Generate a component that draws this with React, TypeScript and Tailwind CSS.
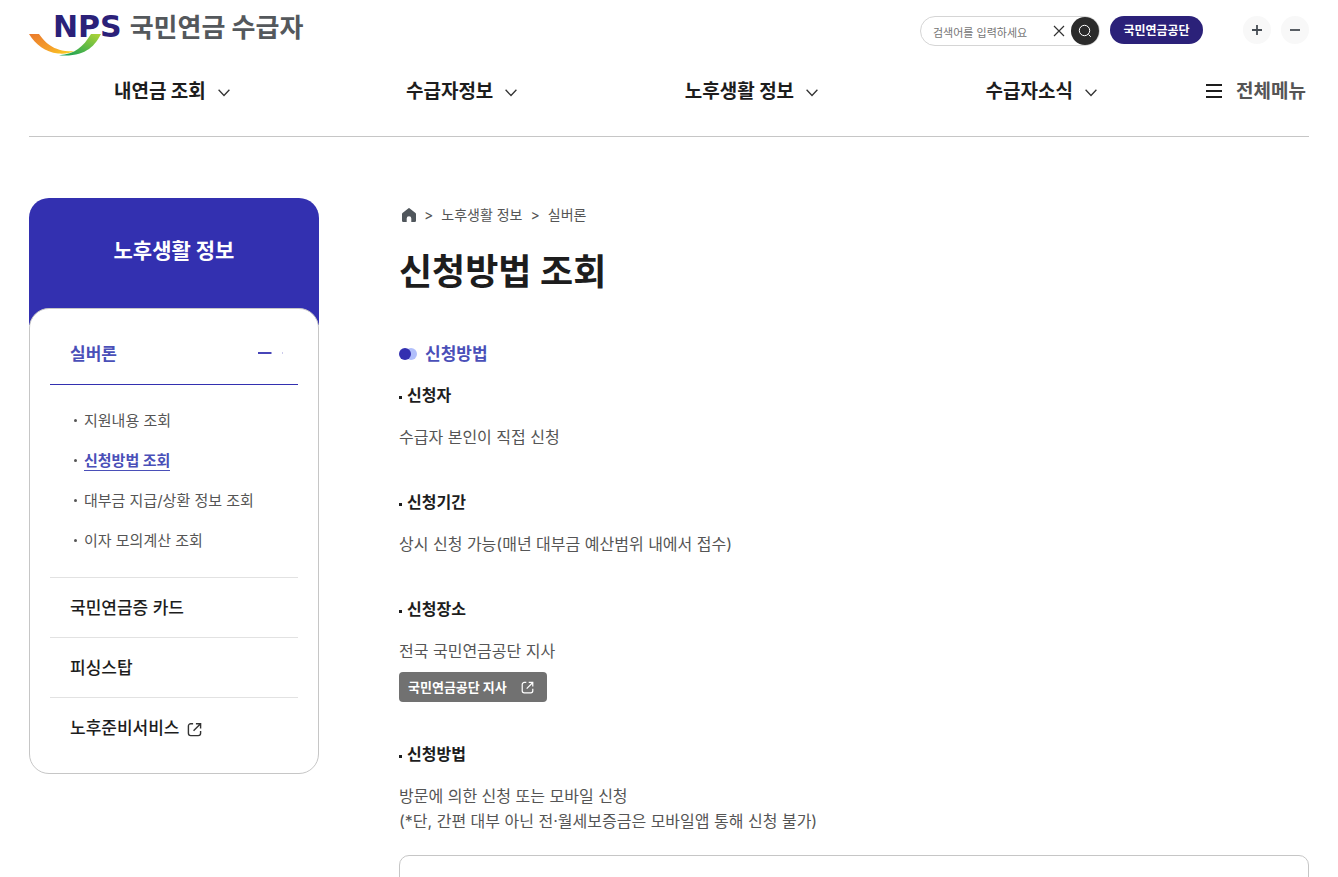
import type { ReactNode } from "react";

const NAV = ["내연금 조회", "수급자정보", "노후생활 정보", "수급자소식"];

const SUB_ITEMS = [
  { label: "지원내용 조회", current: false },
  { label: "신청방법 조회", current: true },
  { label: "대부금 지급/상환 정보 조회", current: false },
  { label: "이자 모의계산 조회", current: false },
];

function ExternalIcon({ className }: { className: string }) {
  return (
    <svg viewBox="0 0 16 16" fill="none" stroke="currentColor" className={className} aria-hidden="true">
      <path d="M6.500 1.800H4A2.500 2.500 0 0 0 1.500 4.300V12A2.500 2.500 0 0 0 4 14.500h8a2.500 2.500 0 0 0 2.500-2.500V9.500" strokeWidth="1.500" />
      <path d="M9.500 1.800h5v5M14.200 2.100 7 9.300" strokeWidth="1.500" />
    </svg>
  );
}

function Logo() {
  return (
    <a href="#" className="relative flex h-[44px] items-start" aria-label="NPS 국민연금 수급자">
      <svg viewBox="0 0 72 24" className="absolute left-0 top-[19px] h-[24px] w-[72px]" aria-hidden="true">
        <defs>
          <linearGradient id="orange" x1="0" y1="0" x2="1" y2="1">
            <stop offset="0" stopColor="#ea7a2c" />
            <stop offset="0.600" stopColor="#f5a02a" />
            <stop offset="1" stopColor="#fbd520" />
          </linearGradient>
          <linearGradient id="green" x1="0" y1="1" x2="1" y2="0">
            <stop offset="0" stopColor="#0f9d58" />
            <stop offset="0.500" stopColor="#5cb947" />
            <stop offset="1" stopColor="#b2d536" />
          </linearGradient>
        </defs>
        <path d="M0 1h10C16 9 24 19 45 18.300 41 20.300 35 21 29 20.500 16 19 7 12 0 1Z" fill="url(#orange)" />
        <path d="M62 1h10C66 13 56 24.500 30 22.300 46 21 54 14 62 1Z" fill="url(#green)" />
      </svg>
      <span className="relative ml-[24px] font-['DejaVu_Sans'] text-[30px] font-bold leading-[26px] text-[#2b2179]">NPS</span>
      <span className="ml-[8px] text-[26px] font-bold leading-[27px] text-[#54585c]">국민연금 수급자</span>
    </a>
  );
}

function Block({ title, children }: { title: string; children: ReactNode }) {
  return (
    <section className="mb-[40px]">
      <h3 className="flex items-center gap-[5px] text-[16px] font-bold leading-[25px] text-[#1d1d1d]">
        <span className="mt-1 size-[3px] bg-[#1d1d1d]" />
        {title}
      </h3>
      <div className="mt-[17px] text-[16px] leading-[25px] text-[#555]">{children}</div>
    </section>
  );
}

export default function App() {
  return (
    <div className="min-h-screen bg-white font-[Inter,'Noto_Sans_CJK_KR',sans-serif] text-[#1d1d1d]">
      <div className="mx-auto max-w-7xl">
        <header className="border-b border-[#c6c6c6]">
          <div className="flex items-start justify-between pt-[14px]">
            <Logo />
            <div className="flex items-start pt-[2px]">
              <form role="search" className="flex h-[30px] w-[180px] items-center rounded-full border border-[#d5d5d5] pl-3" onSubmit={(e) => e.preventDefault()}>
                <input type="text" aria-label="검색어" placeholder="검색어를 입력하세요" className="min-w-0 flex-1 pt-[4px] text-[11px] outline-none placeholder:text-[#757575]" />
                <button type="button" aria-label="지우기" className="mr-[6px] grid size-[12px] place-items-center">
                  <svg viewBox="0 0 12 12" className="size-[12px]" stroke="#333" strokeWidth="1.200" aria-hidden="true">
                    <path d="M1 1l10 10M11 1 1 11" />
                  </svg>
                </button>
                <button type="submit" aria-label="검색" className="grid size-[28px] place-items-center rounded-full bg-[#2b2b2b]">
                  <svg viewBox="0 0 14 14" className="size-[14px]" fill="none" stroke="#fff" aria-hidden="true">
                    <circle cx="6.500" cy="6.500" r="5.200" />
                    <path d="m10.500 10.500 2.300 2.300" />
                  </svg>
                </button>
              </form>
              <a href="#" className="ml-[10px] grid h-[28px] w-[93px] place-items-center rounded-full bg-[#2b2179] pt-px text-[12px] font-bold text-white">국민연금공단</a>
              <button type="button" aria-label="확대" className="ml-[40px] grid size-[28px] place-items-center rounded-full bg-[#f8f8f8]">
                <svg viewBox="0 0 10 10" className="size-[10px]" stroke="#464c53" strokeWidth="1.800" aria-hidden="true">
                  <path d="M0 5h10M5 0v10" />
                </svg>
              </button>
              <button type="button" aria-label="축소" className="ml-[10px] grid size-[28px] place-items-center rounded-full bg-[#f8f8f8]">
                <svg viewBox="0 0 10 10" className="size-[10px]" stroke="#464c53" strokeWidth="1.800" aria-hidden="true">
                  <path d="M0 5h10" />
                </svg>
              </button>
            </div>
          </div>
          <nav className="flex h-[78px] items-start pt-[19px]" aria-label="주 메뉴">
            <ul className="grid flex-1 grid-cols-4 pr-[18px]">
              {NAV.map((label) => (
                <li key={label} className="flex justify-center pr-1">
                  <button type="button" className="flex items-center gap-[12px] text-[19px] font-bold leading-[30px]">
                    {label}
                    <svg viewBox="0 0 12 8" className="mt-[2px] h-[8px] w-[12px]" fill="none" stroke="#333" strokeWidth="1.300" aria-hidden="true">
                      <path d="m.6.8 5.400 5.700L11.400.8" />
                    </svg>
                  </button>
                </li>
              ))}
            </ul>
            <button type="button" className="mr-[3px] flex items-center gap-[14px] text-[19px] font-bold leading-[30px] text-[#555]">
              <svg viewBox="0 0 16 14" className="mb-[2px] h-[14px] w-[16px]" stroke="#1d1d1d" strokeWidth="1.800" aria-hidden="true">
                <path d="M0 1h16M0 7h16M0 13h16" />
              </svg>
              전체메뉴
            </button>
          </nav>
        </header>

        <div className="flex items-start gap-[80px] pt-[61px]">
          <aside className="w-[290px] shrink-0">
            <h2 className="h-[127px] rounded-t-[20px] bg-[#3330b0] pt-[38px] text-center text-[21px] font-bold leading-[30px] text-white">노후생활 정보</h2>
            <div className="relative -mt-[17px] rounded-[20px] border border-[#c6c6c6] bg-white px-5 py-[15px]">
              <button type="button" className="flex h-[61px] w-full items-center justify-between border-b border-[#3330b0] pl-5 pr-[14px] pt-[2px] text-[17px] font-bold text-[#4a4fb8]">
                실버론
                <svg viewBox="0 0 26 4" className="mb-1 h-[4px] w-[26px]" aria-hidden="true">
                  <path d="M0 2h13.500" stroke="#3330b0" strokeWidth="1.800" />
                  <path d="M24 2h1" stroke="#3330b0" strokeOpacity="0.500" />
                </svg>
              </button>
              <ul className="border-b border-[#e2e2e2] pb-[17px] pl-6 pt-[15px]">
                {SUB_ITEMS.map(({ label, current }) => (
                  <li key={label} className="flex h-[40px] items-center gap-[7px] text-[15px] text-[#555]">
                    <span className="size-[3px] rounded-full bg-[#555]" />
                    <a href="#" className={current ? "border-b border-[#4a4fb8] pt-[2px] font-bold leading-[18px] text-[#4a4fb8]" : "pt-[2px] leading-[18px]"}>{label}</a>
                  </li>
                ))}
              </ul>
              <a href="#" className="flex h-[60px] items-center border-b border-[#e2e2e2] pl-5 pt-[2px] text-[17px] font-medium">국민연금증 카드</a>
              <a href="#" className="flex h-[60px] items-center border-b border-[#e2e2e2] pl-5 pt-[2px] text-[17px] font-medium">피싱스탑</a>
              <a href="#" className="flex h-[60px] items-center gap-[8px] pl-5 pt-[2px] text-[17px] font-medium">
                노후준비서비스
                <ExternalIcon className="size-[15px] text-[#333]" />
              </a>
            </div>
          </aside>

          <main className="min-w-0 flex-1 pt-[5px]">
            <nav aria-label="현재 위치" className="flex items-center gap-[8px] text-[14px] leading-[24px] text-[#555]">
              <a href="#" aria-label="홈" className="ml-[3px]">
                <svg viewBox="0 0 14 14" className="size-[14px]" aria-hidden="true">
                  <path d="M6.200.4a1.300 1.300 0 0 1 1.600 0l5.700 4.700q.5.400.5 1V12.700a1.300 1.300 0 0 1-1.300 1.300H9.300V10.500a2.300 2.300 0 0 0-4.600 0V14H1.300A1.300 1.300 0 0 1 0 12.700V6.100q0-.6.5-1Z" fill="#50565c" />
                </svg>
              </a>
              <span>&gt;</span>
              <a href="#">노후생활 정보</a>
              <span>&gt;</span>
              <a href="#">실버론</a>
            </nav>
            <h1 className="mt-[19px] text-[36px] font-bold leading-[52px]">신청방법 조회</h1>
            <h2 className="mb-[16px] mt-[43px] flex items-center gap-[8px] text-[17px] font-bold leading-[26px] text-[#4a4fb8]">
              <svg viewBox="0 0 18 12" className="h-[12px] w-[18px]" aria-hidden="true">
                <circle cx="12" cy="6" r="6" fill="#b1bffb" />
                <circle cx="6" cy="6" r="6" fill="#3330b0" />
              </svg>
              신청방법
            </h2>
            <Block title="신청자">
              <p>수급자 본인이 직접 신청</p>
            </Block>
            <Block title="신청기간">
              <p>상시 신청 가능(매년 대부금 예산범위 내에서 접수)</p>
            </Block>
            <Block title="신청장소">
              <p>전국 국민연금공단 지사</p>
              <a href="#" className="mt-[8px] inline-flex h-[30px] items-center gap-[14px] rounded-[4px] bg-[#717171] pl-[9px] pr-[13px] align-top text-[13px] font-bold text-white">
                국민연금공단 지사
                <ExternalIcon className="size-[13px]" />
              </a>
            </Block>
            <Block title="신청방법">
              <p>방문에 의한 신청 또는 모바일 신청</p>
              <p>(*단, 간편 대부 아닌 전·월세보증금은 모바일앱 통해 신청 불가)</p>
              <div className="mt-[21px] h-[160px] rounded-[10px] border border-[#c6c6c6]" />
            </Block>
          </main>
        </div>
      </div>
    </div>
  );
}
